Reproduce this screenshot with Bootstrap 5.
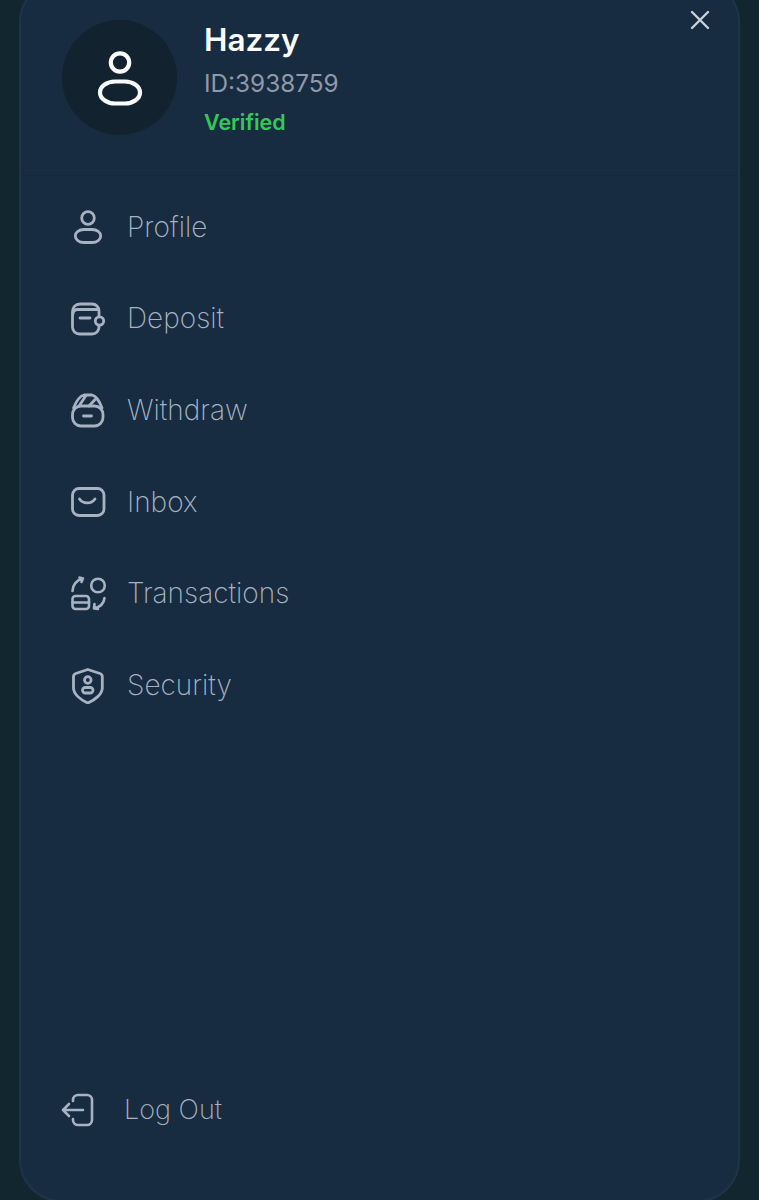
<!DOCTYPE html>
<html lang="en">

<head>
    <meta charset="UTF-8">
    <meta name="viewport" content="width=device-width, initial-scale=1.0">
    <title>Menu</title>
    <link href="https://cdn.jsdelivr.net/npm/bootstrap@5.3.2/dist/css/bootstrap.min.css" rel="stylesheet">
    <style>
        html, body {
            height: 1200px;
            overflow: hidden;
        }

        body {
            background-color: #11262f;
            font-family: Inter, "Liberation Sans", sans-serif;
        }

        .drawer {
            height: 1222px;
            margin: -20px 19px 0 19px;
            background-color: #172c40;
            border: 2px solid #1e3547;
            border-radius: 42px;
        }

        .drawer-head {
            height: 194px;
            padding: 38px 0 0 41px;
            border-bottom: 1px solid #152839;
        }

        .avatar {
            width: 115px;
            height: 115px;
            background-color: #12222f;
        }

        .who {
            margin: 1px 0 0 27px;
        }

        .who-name {
            font-size: 31.4px;
            font-weight: 600;
            line-height: 38px;
            color: #fbfcfd;
        }

        .who-id {
            font-size: 24.3px;
            line-height: 40px;
            margin-top: 4px;
            color: #8f99ab;
        }

        .who-status {
            font-size: 21.5px;
            font-weight: 600;
            line-height: 30px;
            margin-top: 4px;
            color: #35c859;
        }

        .btn-shut {
            top: 26px;
            right: 26px;
            width: 24px;
            height: 24px;
            line-height: 0;
        }

        .menu-list {
            padding: 5px 0 0 48px;
        }

        .menu-item {
            height: 91.6px;
            font-size: 28px;
            font-weight: 250;
            color: #a9b2c3;
            text-decoration: none;
        }

        .menu-item svg {
            width: 38px;
            height: 38px;
            margin-right: 20px;
            flex-shrink: 0;
        }

        .logout-item {
            padding: 0 0 69px 40px;
            height: 111px;
            font-size: 27px;
            font-weight: 250;
            color: #a9b2c3;
            text-decoration: none;
        }

        .logout-item svg {
            width: 38px;
            height: 38px;
            margin-right: 25px;
        }
    </style>
</head>

<body>
    <div class="drawer d-flex flex-column position-relative">
        <div class="drawer-head d-flex align-items-start">
            <div class="avatar rounded-circle d-flex align-items-center justify-content-center">
                <svg width="56" height="56" viewBox="0 0 56 56" fill="none" stroke="#fbfcfd" stroke-width="4.2">
                    <circle cx="28" cy="12.5" r="9.2" />
                    <rect x="8" y="31.5" width="40" height="22" rx="15" ry="11" />
                </svg>
            </div>
            <div class="who">
                <div class="who-name">Hazzy</div>
                <div class="who-id">ID:3938759</div>
                <div class="who-status">Verified</div>
            </div>
        </div>

        <!-- close sits over the header corner -->
        <a href="#" class="btn-shut position-absolute" aria-label="Close">
            <svg width="24" height="24" viewBox="0 0 24 24" fill="none" stroke="#c9d1da" stroke-width="2.4" stroke-linecap="round">
                <path d="M4 4 L20 20 M20 4 L4 20" />
            </svg>
        </a>

        <nav class="menu-list d-flex flex-column">
            <a href="#" class="menu-item d-flex align-items-center">
                <svg viewBox="0 0 38 38" fill="none" stroke="#a9b2c3" stroke-width="2.8">
                    <circle cx="19" cy="10" r="6.3" />
                    <rect x="6.3" y="21.5" width="25.4" height="13" rx="8.5" ry="6.5" />
                </svg>
                Profile
            </a>
            <a href="#" class="menu-item d-flex align-items-center">
                <svg viewBox="0 0 38 38" fill="none" stroke="#a9b2c3" stroke-width="2.8" stroke-linecap="round">
                    <path d="M30 17 V12 C30 8 27 5 23 5 H11 C6.5 5 3.5 8 3.5 13 V28 C3.5 32 6.5 35 10.5 35 H23 C27 35 30 32 30 28 V27" />
                    <path d="M4 15 C4 12 6 10.500 9 10.500 H29 M11 19 H21" />
                    <circle cx="30.500" cy="22" r="4.200" />
                </svg>
                Deposit
            </a>
            <a href="#" class="menu-item d-flex align-items-center">
                <svg viewBox="0 0 38 38" fill="none" stroke="#a9b2c3" stroke-width="2.8" stroke-linecap="round" stroke-linejoin="round">
                    <rect x="3.500" y="15" width="30.500" height="20" rx="8.500" />
                    <path d="M4.500 17 C7 11 10 5 15 4 H23 C27 5 31 11 33 17 M10 15 L17 4.500 M20 15 L27 7.500 M14.500 25 H22.500" />
                </svg>
                Withdraw
            </a>
            <a href="#" class="menu-item d-flex align-items-center">
                <svg viewBox="0 0 38 38" fill="none" stroke="#a9b2c3" stroke-width="2.8" stroke-linecap="round">
                    <rect x="3.500" y="5.500" width="31.500" height="27" rx="6.500" />
                    <path d="M10.500 16 C14 21 22 21.500 26 16" />
                </svg>
                Inbox
            </a>
            <a href="#" class="menu-item d-flex align-items-center">
                <svg viewBox="0 0 38 38" fill="none" stroke="#a9b2c3" stroke-width="2.6" stroke-linecap="round" stroke-linejoin="round">
                    <circle cx="29" cy="11.500" r="6.800" />
                    <rect x="3.500" y="22" width="16.500" height="13" rx="3" />
                    <path d="M3.500 28.500 H20 M3.500 17 C3.500 11 7.500 6 14 4.500 M10.500 3.500 L14 4.500 L12.500 8 M35.500 24 C35 29 31 33 25 34.500 M25.500 30 L25 34.500 L29 35" />
                </svg>
                Transactions
            </a>
            <a href="#" class="menu-item d-flex align-items-center">
                <svg viewBox="0 0 38 38" fill="none" stroke="#a9b2c3" stroke-width="2.8" stroke-linejoin="round">
                    <path d="M18.800 3.500 L31 7.500 C32.500 8 33.300 9 33.300 10.500 V22 C33.300 28 26 34 18.800 37 C11.500 34 4.500 28 4.500 22 V10.500 C4.500 9 5.300 8 6.800 7.500 Z" />
                    <circle cx="18.800" cy="14" r="3.300" />
                    <rect x="13.500" y="21.500" width="10.500" height="5.500" rx="2.750" />
                </svg>
                Security
            </a>
        </nav>

        <a href="#" class="logout-item d-flex align-items-center mt-auto">
            <svg viewBox="0 0 38 38" fill="none" stroke="#a9b2c3" stroke-width="2.6" stroke-linecap="round" stroke-linejoin="round">
                <path d="M12 10 V9 a5 5 0 0 1 5 -5 H26 a5 5 0 0 1 5 5 V29 a5 5 0 0 1 -5 5 H17 a5 5 0 0 1 -5 -5 V28" />
                <path d="M22 19 H2 M8 13 L2 19 L8 25" />
            </svg>
            Log Out
        </a>
    </div>

    <script src="https://cdn.jsdelivr.net/npm/bootstrap@5.3.2/dist/js/bootstrap.bundle.min.js"></script>
</body>

</html>
